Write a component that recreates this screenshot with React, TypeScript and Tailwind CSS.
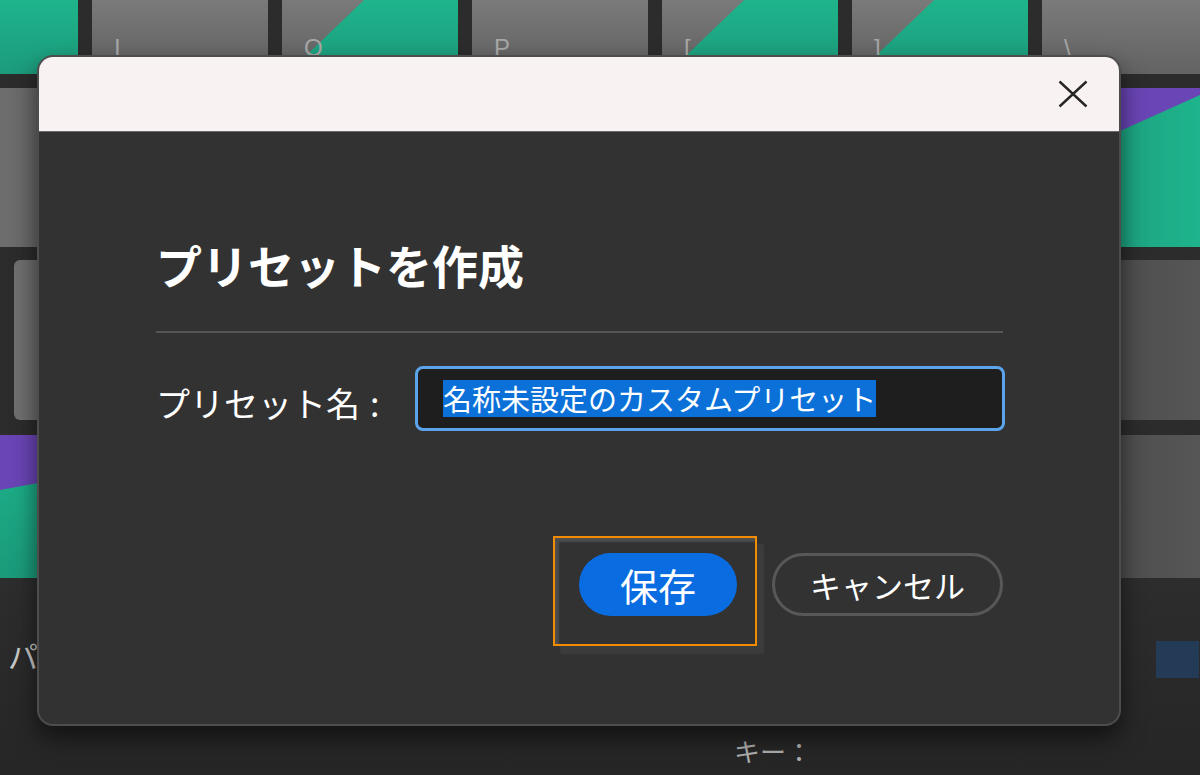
import type { ReactNode } from 'react'

const jp = "font-['Noto_Sans_CJK_JP','Noto_Sans',sans-serif]"

function GrayKey({ label, green }: { label: string; green?: boolean }) {
  return (
    <div className="relative w-[176px] shrink-0 bg-gradient-to-b from-[#7a7a7a] to-[#606060]">
      {green && (
        <div className="absolute inset-0 bg-gradient-to-b from-[#1eb48c] to-[#1c9b7b] [clip-path:polygon(46.6%_0,100%_0,100%_100%,2.8%_100%)]" />
      )}
      <span className="absolute left-[22px] top-[30px] font-['Liberation_Sans',sans-serif] text-[24px] text-[#a8a8a8]">
        {label}
      </span>
    </div>
  )
}

function SideRow({ left, right, className }: { left: ReactNode; right: ReactNode; className: string }) {
  return (
    <div className={`flex justify-between ${className}`}>
      {left}
      {right}
    </div>
  )
}

export default function App() {
  return (
    <div className={`relative h-[775px] w-[1200px] overflow-hidden bg-[#2c2c2c] ${jp}`}>
      {/* keyboard behind the dialog */}
      <div className="flex h-[74px] gap-[14px]">
        <div className="w-[78px] shrink-0 bg-gradient-to-b from-[#1eb48c] to-[#1c9b7b]" />
        <GrayKey label="I" />
        <GrayKey label="O" green />
        <GrayKey label="P" />
        <GrayKey label="[" green />
        <GrayKey label="]" green />
        <div className="relative flex-1 bg-gradient-to-b from-[#7a7a7a] to-[#636363]">
          <span className="absolute left-[22px] top-[30px] font-['Liberation_Sans',sans-serif] text-[24px] text-[#a8a8a8]">
            \
          </span>
        </div>
      </div>

      <SideRow
        className="mt-[14px] h-[159px]"
        left={<div className="w-[60px] bg-gradient-to-r from-[#6e6e6e] to-[#646464]" />}
        right={
          <div className="relative w-[100px] bg-gradient-to-r from-[#1ca07e] to-[#1eb48c]">
            <div className="absolute inset-0 bg-[#6a45b6] [clip-path:polygon(0_0,100%_0,100%_7px,0_52px)]" />
          </div>
        }
      />

      <SideRow
        className="mt-[13px] h-[160px]"
        left={<div className="ml-[14px] w-[60px] rounded-[6px] bg-gradient-to-r from-[#707070] to-[#666666]" />}
        right={<div className="w-[100px] bg-gradient-to-r from-[#4c4c4c] to-[#565656]" />}
      />

      <SideRow
        className="mt-[15px] h-[143px]"
        left={
          <div className="relative w-[60px] bg-gradient-to-b from-[#1eb48c] to-[#1a9a79]">
            <div className="absolute inset-0 bg-[#6a45b6] [clip-path:polygon(0_0,100%_0,100%_44px,0_55px)]" />
          </div>
        }
        right={<div className="w-[100px] bg-gradient-to-r from-[#4c4c4c] to-[#565656]" />}
      />

      <div className="flex h-[197px] items-start bg-gradient-to-b from-[#2d2d2d] to-[#262626]">
        <span className="ml-[8px] mt-[62px] text-[30px] leading-none text-[#c8c8c8]">パ</span>
        <span className="ml-[696px] mt-[160px] text-[26px] leading-none text-[#b0b0b0]">キー：</span>
        <div className="ml-[344px] mt-[63px] h-[37px] w-[43px] bg-[#243b58]" />
      </div>

      {/* dialog */}
      <div className="absolute left-[37px] top-[55px] flex h-[671px] w-[1084px] flex-col overflow-hidden rounded-[16px] border-2 border-[#4d4d4d] bg-[#323232] shadow-[0_12px_24px_rgba(0,0,0,0.55)]">
        <div className="flex h-[75px] shrink-0 items-center justify-end border-b border-[#6a6a6a] bg-[#f9f2f2] pr-[31px]">
          <svg width="30" height="28" viewBox="0 0 30 28" aria-label="閉じる">
            <path d="M1.5 1.5 L28.5 26.5 M28.5 1.5 L1.5 26.5" stroke="#262626" strokeWidth="2.4" fill="none" />
          </svg>
        </div>

        <div className="flex flex-1 flex-col pl-[117px] pr-[116px] pt-[109px]">
          <h1 className="text-[46px] font-bold leading-none text-white">プリセットを作成</h1>
          <div className="mt-[44px] h-[2px] bg-[#565656]" />

          <div className="mt-[33px] flex h-[65px] items-center">
            <label className="mt-[8px] flex w-[259px] shrink-0 text-[34px] leading-none text-white">
              プリセット名
              <span className="ml-[10px]">:</span>
            </label>
            <div className="-mr-[2px] flex h-[65px] w-[590px] items-center rounded-[8px] border-[3px] border-[#5ba4ec] bg-[#1e1e1e] pl-[25px]">
              <span className="inline-block h-[37px] bg-[#0b70d8] text-[29px] leading-[37px] text-white">
                名称未設定のカスタムプリセット
              </span>
            </div>
          </div>

          <div className="mt-[105px] flex items-start justify-end gap-[15px]">
            <div className="h-[110px] w-[204px] border-2 border-[#f28c00] pl-[24px] pt-[15px] shadow-[inset_4px_4px_2px_#4d4d4d,7px_8px_2px_#3c3c3c]">
              <button className="flex h-[63px] w-[158px] items-center justify-center rounded-full bg-[#0a6ce1] text-[38px] leading-none text-white">
                保存
              </button>
            </div>
            <button className="mt-[17px] flex h-[63px] w-[231px] items-center justify-center rounded-full border-[3px] border-[#585858] text-[31px] leading-none text-white">
              キャンセル
            </button>
          </div>
        </div>
      </div>
    </div>
  )
}
